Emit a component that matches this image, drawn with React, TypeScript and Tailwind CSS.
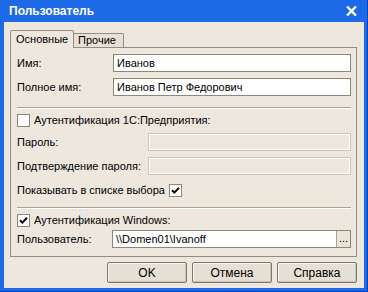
import React from 'react';

const font = "font-['Liberation_Sans',Arial,sans-serif]";

function Check({ checked }: { checked?: boolean }) {
  return (
    <span className="w-[13px] h-[13px] shrink-0 border border-[#8d8879] bg-white flex items-center justify-center">
      {checked && (
        <svg width="9" height="9" viewBox="0 0 9 9">
          <path d="M1 4.2 L3.4 6.6 L8 1.8" fill="none" stroke="#000" strokeWidth="2" />
        </svg>
      )}
    </span>
  );
}

function Field({ value, disabled, dots }: { value?: string; disabled?: boolean; dots?: boolean }) {
  return (
    <div
      className={`flex-1 h-[18px] flex items-center border ${
        disabled ? 'border-[#cbc6b9] bg-transparent shadow-[inset_0_0_0_1px_#fff]' : 'border-[#8d8879] bg-white'
      }`}
    >
      <span className="flex-1 pl-[3px] text-[11px] text-black leading-none">{value}</span>
      {dots && (
        <span className="w-[14px] h-full border-l border-[#a8a397] bg-[#e8e4da] text-[11px] leading-none flex items-center justify-center pb-[2px]">
          ...
        </span>
      )}
    </div>
  );
}

function Btn({ label }: { label: string }) {
  return (
    <button className="w-[80px] h-[21px] border border-[#7d786a] rounded-[2px] bg-[#e4e0d5] shadow-[inset_-1px_-1px_0_#c9c4b6,inset_1px_1px_0_#f7f5ef] text-[12px] font-normal text-black leading-none">
      {label}
    </button>
  );
}

export default function App() {
  return (
    <div className={`w-[368px] h-[292px] flex flex-col bg-[#1d6ae9] ${font} select-none`}>
      {/* TITLE BAR */}
      <div className="h-[22px] flex items-center justify-between pl-[9px] pr-[10px] bg-[#1d6ae9] border-r border-[#0a3fc4]">
        <span className="text-white text-[12px] font-bold leading-none">Пользователь</span>
        <svg width="11" height="10" viewBox="0 0 11 10">
          <path d="M1 0.5 L10 9.5 M10 0.5 L1 9.5" stroke="#fff" strokeWidth="2.4" />
        </svg>
      </div>

      {/* BODY */}
      <div className="flex-1 flex pl-[4px] pr-[3px] pb-[3px] bg-[#1d6ae9] border-r border-b border-[#0a3fc4]">
        <div className="flex-1 flex flex-col pl-[6px] pr-[7px] pt-[7px] bg-[#ede7de] bg-[radial-gradient(#e2dbd0_0.6px,transparent_0.8px)] bg-[length:8px_8px]">
          {/* TABS */}
          <div className="flex items-end h-[18px]">
            <div className="w-[64px] h-[18px] border border-b-0 border-[#928d80] rounded-t-[2px] bg-[#ede7de] flex items-center pl-[5px] text-[11px] leading-none relative top-[1px] z-10">
              Основные
            </div>
            <div className="w-[50px] h-[14px] border border-l-0 border-b-0 border-[#928d80] rounded-tr-[2px] bg-[#e6e0d6] flex items-center pl-[4px] text-[11px] leading-none">
              Прочие
            </div>
          </div>

          {/* PANEL */}
          <div className="h-[210px] border border-[#928d80] flex flex-col pl-[6px] pr-[5px] text-[11px] text-black leading-none">
            <div className="mt-[6px] flex items-center">
              <span className="w-[96px]">Имя:</span>
              <Field value="Иванов" />
            </div>
            <div className="mt-[6px] flex items-center">
              <span className="w-[96px]">Полное имя:</span>
              <Field value="Иванов Петр Федорович" />
            </div>

            <div className="mt-[11px] h-[2px] border-t border-[#a9a294] border-b border-b-white" />

            <div className="mt-[5px] flex items-center gap-[4px] h-[13px]">
              <Check />
              <span>Аутентификация 1С:Предприятия:</span>
            </div>
            <div className="mt-[6px] flex items-center">
              <span className="w-[131px]">Пароль:</span>
              <Field disabled />
            </div>
            <div className="mt-[6px] flex items-center">
              <span className="w-[131px]">Подтверждение пароля:</span>
              <Field disabled />
            </div>
            <div className="mt-[8px] flex items-center gap-[4px] h-[14px]">
              <span>Показывать в списке выбора</span>
              <Check checked />
            </div>

            <div className="mt-[10px] h-[2px] border-t border-[#a9a294] border-b border-b-white" />

            <div className="mt-[5px] flex items-center gap-[4px] h-[13px]">
              <Check checked />
              <span>Аутентификация Windows:</span>
            </div>
            <div className="mt-[3px] flex items-center">
              <span className="w-[95px]">Пользователь:</span>
              <Field value="\\Domen01\Ivanoff" dots />
            </div>
          </div>

          {/* BUTTONS */}
          <div className="mt-[5px] flex justify-end gap-[5px]">
            <Btn label="OK" />
            <Btn label="Отмена" />
            <Btn label="Справка" />
          </div>
        </div>
      </div>
    </div>
  );
}
